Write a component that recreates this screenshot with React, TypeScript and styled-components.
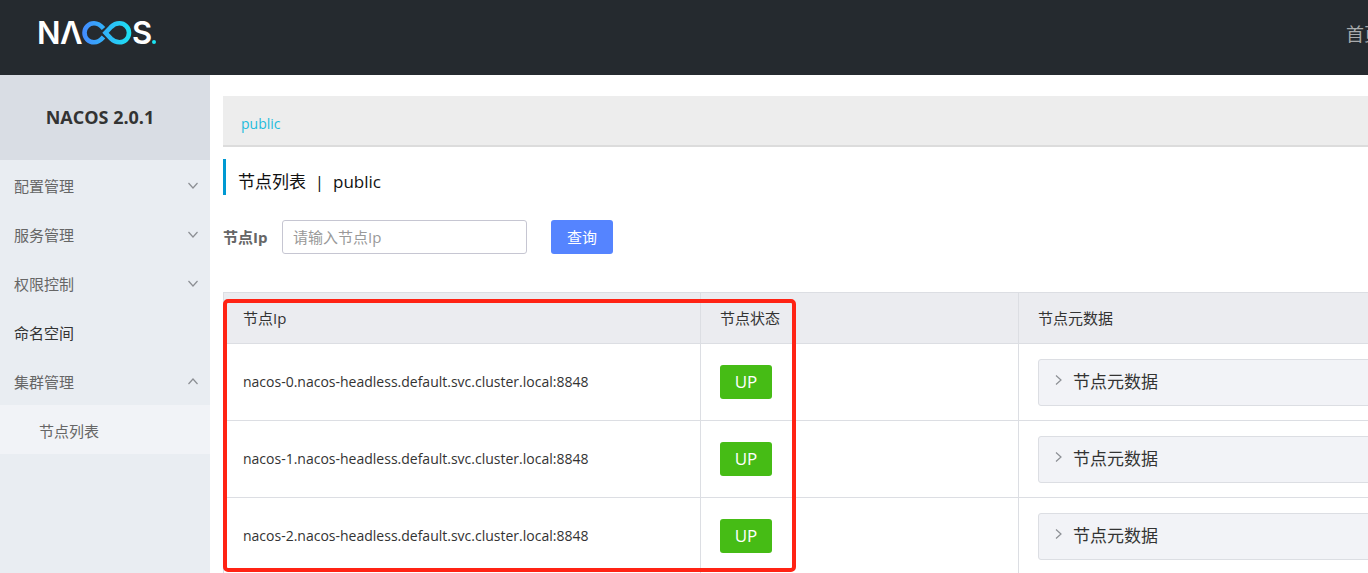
import React from 'react';
import styled, { createGlobalStyle, css } from 'styled-components';

const GlobalStyle = createGlobalStyle`
  *, *::before, *::after { box-sizing: border-box; }
  body {
    margin: 0;
    overflow: hidden;
    background: #fff;
    color: #333;
    font-family: "Open Sans", "Noto Sans CJK SC", sans-serif;
    font-size: 15px;
    line-height: 20px;
  }
`;

const Page = styled.div`
  width: calc(100% + 14px);
  min-height: 100vh;
  display: flex;
  flex-direction: column;
`;

const Header = styled.header`
  height: 75px;
  display: flex;
  justify-content: space-between;
  padding: 12px 0 0 36px;
  background: #252a2f;
`;

const Nav = styled.nav`
  padding-top: 12px;
`;

const NavLink = styled.a`
  color: #a8aaac;
  font-size: 18px;
  text-decoration: none;
  white-space: nowrap;
`;

const Body = styled.div`
  flex: 1;
  display: flex;
`;

const Sidebar = styled.aside`
  flex: 0 0 210px;
  background: #e9edf2;
`;

const Version = styled.h1`
  height: 85px;
  margin: 0;
  padding: 0 10px 2px 0;
  display: flex;
  align-items: center;
  justify-content: center;
  background: #d9dde4;
  color: #333;
  font-size: 18px;
  font-weight: 700;
`;

const Menu = styled.ul`
  margin: 0;
  padding: 0;
  list-style: none;
`;

const menuRow = css`
  width: 100%;
  height: 49px;
  display: flex;
  align-items: center;
  justify-content: space-between;
  border: 0;
  padding: 2px 11px 0 14px;
  font: inherit;
  text-decoration: none;
`;

const MenuButton = styled.button`
  ${menuRow}
  background: transparent;
  color: #666;
`;

const MenuLink = styled.a<{ $sub?: boolean }>`
  ${menuRow}
  padding-left: ${(p) => (p.$sub ? 39 : 14)}px;
  background: ${(p) => (p.$sub ? '#f1f3f7' : 'transparent')};
  color: ${(p) => (p.$sub ? '#666' : '#333')};
`;

const Icon = styled.svg`
  display: block;
  flex: none;
  fill: none;
  stroke: #8c8f94;
  stroke-width: 1.2;
`;

const Main = styled.main`
  flex: 1;
  min-width: 0;
  padding: 21px 0 0 13px;
`;

const NamespaceBar = styled.div`
  height: 51px;
  padding: 17px 18px 0;
  border-bottom: 2px solid #dcdcdc;
  background: #ededed;
`;

const NamespaceLink = styled.a`
  color: #1fbcdc;
  font-size: 14px;
  text-decoration: none;
`;

const Title = styled.h2`
  height: 36px;
  margin: 12px 0 25px;
  padding: 10px 0 0 12px;
  border-left: 3px solid #0099d2;
  color: #111;
  font-size: 17px;
  font-weight: 400;
  line-height: 26px;
  white-space: pre;
`;

const SearchForm = styled.form`
  display: flex;
  align-items: center;
  margin-bottom: 38px;
`;

const FieldLabel = styled.label`
  width: 59px;
  color: #666;
  font-weight: 700;
`;

const TextInput = styled.input`
  width: 245px;
  height: 34px;
  margin-right: 24px;
  padding: 0 10px;
  border: 1px solid #c6c6d2;
  border-radius: 3px;
  font: inherit;
  color: #333;
  &::placeholder { color: #999; opacity: 1; }
`;

const SearchButton = styled.button`
  width: 62px;
  height: 34px;
  border: 0;
  border-radius: 3px;
  background: #5584ff;
  color: #fff;
  font: inherit;
`;

const TableArea = styled.div`
  position: relative;
  margin-right: -40px;
`;

const Table = styled.table`
  width: 100%;
  table-layout: fixed;
  border-collapse: collapse;
`;

const HeadCell = styled.th<{ $width?: number }>`
  width: ${(p) => (p.$width ? `${p.$width}px` : 'auto')};
  height: 51px;
  padding: 0 19px;
  border: 1px solid #dcdee3;
  background: #ebecf0;
  font-weight: 400;
  text-align: left;
`;

const Cell = styled.td`
  height: 77px;
  padding: 0 19px;
  border: 1px solid #dcdee3;
  font-size: 14px;
`;

const Status = styled.span`
  width: 52px;
  height: 34px;
  display: flex;
  align-items: center;
  justify-content: center;
  border-radius: 3px;
  background: #46bc15;
  color: #fff;
  font-size: 17px;
`;

const MetaButton = styled.button`
  width: 100%;
  height: 47px;
  display: flex;
  align-items: center;
  gap: 9px;
  padding: 0 13px;
  border: 1px solid #dcdee3;
  border-radius: 3px;
  background: #f2f3f7;
  color: #333;
  font: inherit;
  font-size: 17px;
  ${Icon} { margin-bottom: 4px; }
`;

const Highlight = styled.div`
  position: absolute;
  top: 7px;
  left: 0;
  width: 573px;
  height: 273px;
  border: 4px solid #ff2314;
  border-radius: 5px;
  pointer-events: none;
`;

function Logo() {
  return (
    <svg width="124" height="46" viewBox="-2 -8 124 46" role="img" aria-label="NACOS.">
      <defs>
        <linearGradient id="loop" gradientUnits="userSpaceOnUse" x1="44" y1="0" x2="94" y2="0">
          <stop offset="0" stopColor="#4489ff" />
          <stop offset="1" stopColor="#1be4f2" />
        </linearGradient>
      </defs>
      <g fill="#fff" fontFamily="Inter, sans-serif" fontSize="31" fontWeight="600">
        <text x="-1" y="24">N</text>
        <text x="22" y="24">Λ</text>
        <text x="94" y="24">S</text>
      </g>
      <g fill="none" stroke="url(#loop)" strokeWidth="4.6">
        <path d="M65.500 8.500C62.500 5 59.500 3.300 56 3.300A9.500 9.500 0 0 0 56 22.300C60 22.300 62.500 20.500 65.500 17" />
        <path d="M67.500 12.800L73 7C75.500 4.500 78 3.300 81.500 3.300A9.500 9.500 0 0 1 81.500 22.300C78 22.300 75.500 21 73 18.600Z" />
      </g>
      <circle cx="116" cy="22" r="2" fill="#1be4f2" />
    </svg>
  );
}

function Chevron({ dir }: { dir: 'up' | 'down' | 'right' }) {
  const d = { up: 'M1.5 8L6 3L10.5 8', down: 'M1.5 3L6 8L10.5 3', right: 'M4 1.500L9 6L4 10.500' }[dir];
  return (
    <Icon width="12" height="12" viewBox="0 0 12 12" aria-hidden="true">
      <path d={d} />
    </Icon>
  );
}

const nodes = [0, 1, 2].map((n) => `nacos-${n}.nacos-headless.default.svc.cluster.local:8848`);

export default function App() {
  return (
    <Page>
      <GlobalStyle />
      <Header>
        <Logo />
        <Nav>
          <NavLink href="#home">首页</NavLink>
        </Nav>
      </Header>
      <Body>
        <Sidebar>
          <Version>NACOS 2.0.1</Version>
          <Menu>
            {['配置管理', '服务管理', '权限控制'].map((name) => (
              <li key={name}>
                <MenuButton type="button" aria-expanded="false">
                  {name}
                  <Chevron dir="down" />
                </MenuButton>
              </li>
            ))}
            <li>
              <MenuLink href="#namespace">命名空间</MenuLink>
            </li>
            <li>
              <MenuButton type="button" aria-expanded="true">
                集群管理
                <Chevron dir="up" />
              </MenuButton>
              <Menu>
                <li>
                  <MenuLink href="#nodes" $sub>节点列表</MenuLink>
                </li>
              </Menu>
            </li>
          </Menu>
        </Sidebar>
        <Main>
          <NamespaceBar>
            <NamespaceLink href="#public">public</NamespaceLink>
          </NamespaceBar>
          <Title>{'节点列表  |  public'}</Title>
          <SearchForm onSubmit={(e) => e.preventDefault()}>
            <FieldLabel htmlFor="node-ip">节点Ip</FieldLabel>
            <TextInput id="node-ip" type="text" placeholder="请输入节点Ip" />
            <SearchButton type="submit">查询</SearchButton>
          </SearchForm>
          <TableArea>
            <Table>
              <thead>
                <tr>
                  <HeadCell scope="col" $width={477}>节点Ip</HeadCell>
                  <HeadCell scope="col" $width={318}>节点状态</HeadCell>
                  <HeadCell scope="col">节点元数据</HeadCell>
                </tr>
              </thead>
              <tbody>
                {nodes.map((node) => (
                  <tr key={node}>
                    <Cell>{node}</Cell>
                    <Cell>
                      <Status>UP</Status>
                    </Cell>
                    <Cell>
                      <MetaButton type="button" aria-expanded="false">
                        <Chevron dir="right" />
                        节点元数据
                      </MetaButton>
                    </Cell>
                  </tr>
                ))}
              </tbody>
            </Table>
            <Highlight />
          </TableArea>
        </Main>
      </Body>
    </Page>
  );
}
